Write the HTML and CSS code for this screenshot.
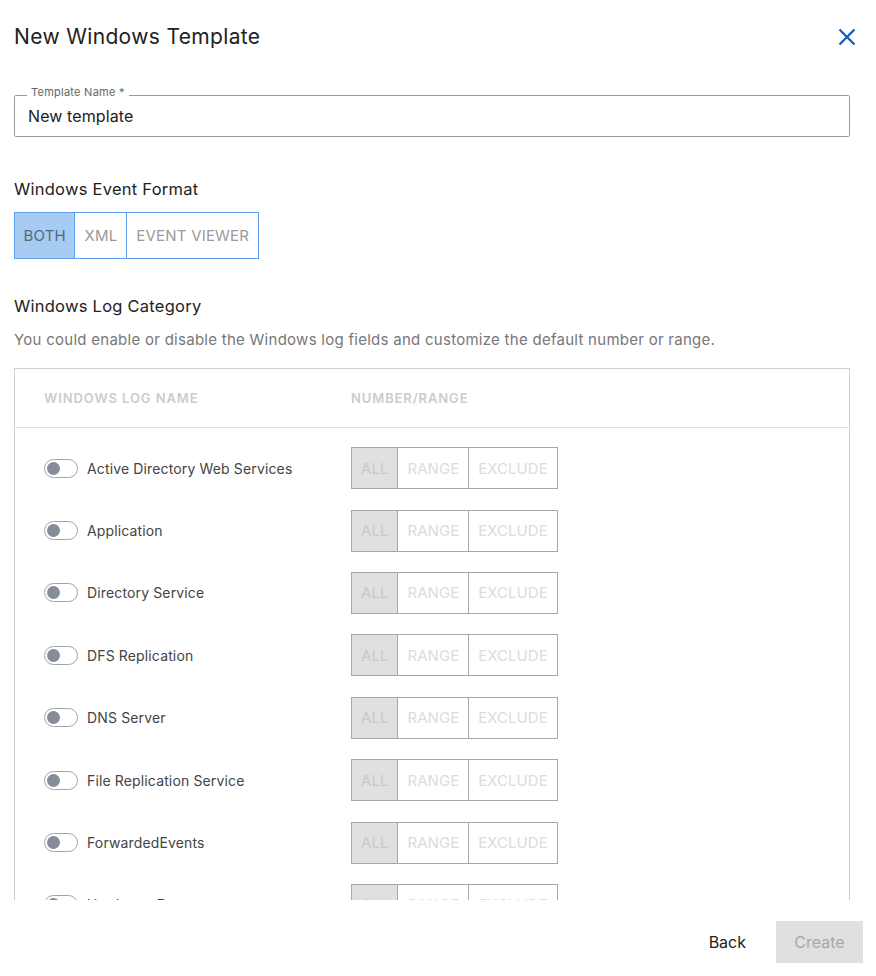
FILE: index.html
```html
<!DOCTYPE html>
<html lang="en">
<head>
<meta charset="utf-8">
<title>New Windows Template</title>
<link rel="stylesheet" href="styles.css">
</head>
<body>
<div class="dialog">
  <div class="dialog-header">
    <h1 class="dialog-title">New Windows Template</h1>
    <button class="close-btn" aria-label="Close">
      <svg width="18" height="18" viewBox="0 0 18 18"><path d="M1.5 1.5 L16.5 16.5 M16.5 1.5 L1.5 16.5" stroke="#0f5fbf" stroke-width="2.3" fill="none"/></svg>
    </button>
  </div>
  <div class="dialog-body">
    <div class="field">
      <span class="field-label">Template Name *</span>
      <div class="field-value">New template</div>
    </div>

    <h2 class="section-title first">Windows Event Format</h2>
    <div class="format-group">
      <span class="format-btn active">BOTH</span>
      <span class="format-btn">XML</span>
      <span class="format-btn">EVENT VIEWER</span>
    </div>

    <h2 class="section-title second">Windows Log Category</h2>
    <p class="section-desc">You could enable or disable the Windows log fields and customize the default number or range.</p>

    <div class="log-table">
      <div class="log-head">
        <div class="col-name">WINDOWS LOG NAME</div>
        <div class="col-range">NUMBER/RANGE</div>
      </div>
      <div class="log-rows">
        <div class="log-row"><div class="col-name"><span class="toggle"><span class="thumb"></span></span>Active Directory Web Services</div><div class="col-range"><div class="seg"><span class="seg-btn on">ALL</span><span class="seg-btn">RANGE</span><span class="seg-btn">EXCLUDE</span></div></div></div>
        <div class="log-row"><div class="col-name"><span class="toggle"><span class="thumb"></span></span>Application</div><div class="col-range"><div class="seg"><span class="seg-btn on">ALL</span><span class="seg-btn">RANGE</span><span class="seg-btn">EXCLUDE</span></div></div></div>
        <div class="log-row"><div class="col-name"><span class="toggle"><span class="thumb"></span></span>Directory Service</div><div class="col-range"><div class="seg"><span class="seg-btn on">ALL</span><span class="seg-btn">RANGE</span><span class="seg-btn">EXCLUDE</span></div></div></div>
        <div class="log-row"><div class="col-name"><span class="toggle"><span class="thumb"></span></span>DFS Replication</div><div class="col-range"><div class="seg"><span class="seg-btn on">ALL</span><span class="seg-btn">RANGE</span><span class="seg-btn">EXCLUDE</span></div></div></div>
        <div class="log-row"><div class="col-name"><span class="toggle"><span class="thumb"></span></span>DNS Server</div><div class="col-range"><div class="seg"><span class="seg-btn on">ALL</span><span class="seg-btn">RANGE</span><span class="seg-btn">EXCLUDE</span></div></div></div>
        <div class="log-row"><div class="col-name"><span class="toggle"><span class="thumb"></span></span>File Replication Service</div><div class="col-range"><div class="seg"><span class="seg-btn on">ALL</span><span class="seg-btn">RANGE</span><span class="seg-btn">EXCLUDE</span></div></div></div>
        <div class="log-row"><div class="col-name"><span class="toggle"><span class="thumb"></span></span>ForwardedEvents</div><div class="col-range"><div class="seg"><span class="seg-btn on">ALL</span><span class="seg-btn">RANGE</span><span class="seg-btn">EXCLUDE</span></div></div></div>
        <div class="log-row"><div class="col-name"><span class="toggle"><span class="thumb"></span></span>Hardware Events</div><div class="col-range"><div class="seg"><span class="seg-btn on">ALL</span><span class="seg-btn">RANGE</span><span class="seg-btn">EXCLUDE</span></div></div></div>
      </div>
    </div>
  </div>
  <div class="dialog-footer">
    <button class="btn-back">Back</button>
    <button class="btn-create" disabled>Create</button>
  </div>
</div>
</body>
</html>
```
FILE: styles.css
```css
* { box-sizing: border-box; }
html, body { margin: 0; padding: 0; background: #fff; }
body { font-family: Inter, "Noto Sans", sans-serif; color: #222; }

.dialog {
  width: 876px;
  height: 976px;
  display: flex;
  flex-direction: column;
  overflow: hidden;
}

.dialog-header {
  height: 74px;
  flex: none;
  display: flex;
  align-items: center;
  justify-content: space-between;
  padding: 0 20px 0 14px;
}
.dialog-title {
  margin: 0;
  font-size: 21px;
  font-weight: 400;
  color: #222;
  line-height: 26px;
  letter-spacing: 0.35px;
}
.close-btn {
  border: 0;
  background: none;
  padding: 0;
  width: 18px;
  height: 18px;
  display: flex;
  cursor: pointer;
}

.dialog-body {
  flex: 1;
  overflow: hidden;
  padding: 21px 26px 0 14px;
}

.field {
  position: relative;
  height: 42px;
  border: 1px solid #9a9a9a;
  border-radius: 2px;
  display: flex;
  align-items: center;
  padding-left: 13px;
}
.field-label {
  position: absolute;
  left: 12px;
  top: -10px;
  padding: 0 4px;
  background: #fff;
  font-size: 11px;
  line-height: 13px;
  color: #666;
  letter-spacing: 0.25px;
}
.field-value {
  font-size: 16px;
  color: #222;
  letter-spacing: 0.1px;
}

.section-title {
  margin: 0;
  font-size: 16.5px;
  font-weight: 400;
  line-height: 20px;
  color: #222;
  letter-spacing: 0.25px;
}
.section-title.first { margin-top: 42px; }
.section-title.second { margin-top: 37px; }

.format-group {
  margin-top: 13px;
  display: inline-flex;
  height: 47px;
  border: 1px solid #5c9ff0;
}
.format-btn {
  display: flex;
  align-items: center;
  padding: 0 9px;
  font-size: 15px;
  letter-spacing: 0.2px;
  color: #9a9a9a;
  border-left: 1px solid #5c9ff0;
}
.format-btn:first-child { border-left: 0; }
.format-btn.active {
  background: #a6ccf4;
  color: #5a6678;
  padding: 0 8.5px;
}

.section-desc {
  margin: 14px 0 0;
  font-size: 15px;
  line-height: 20px;
  color: #777;
  letter-spacing: 0.27px;
}

.log-table {
  margin-top: 18px;
  border: 1px solid #cfcfcf;
  border-bottom: 0;
  height: 600px;
}
.log-head {
  height: 59px;
  display: flex;
  align-items: center;
  border-bottom: 1px solid #e2e2e2;
  font-size: 13px;
  font-weight: 600;
  color: #cccccc;
  letter-spacing: 0.9px;
}
.col-name {
  width: 336px;
  padding-left: 29px;
  display: flex;
  align-items: center;
}
.col-range { flex: 1; }

.log-rows { padding-top: 9px; }
.log-row {
  height: 62.4px;
  display: flex;
  align-items: center;
  font-size: 14px;
  letter-spacing: 0.14px;
  color: #444;
}
.toggle {
  width: 34px;
  height: 19px;
  border: 1.5px solid #a1a5ae;
  border-radius: 10px;
  display: flex;
  align-items: center;
  padding-left: 1.5px;
  margin-right: 9px;
  flex: none;
}
.thumb {
  width: 13px;
  height: 13px;
  border-radius: 50%;
  background: #878c9a;
}

.seg {
  display: inline-flex;
  height: 42px;
  border: 1px solid #a3a7b0;
}
.seg-btn {
  display: flex;
  align-items: center;
  padding: 0 9px;
  font-size: 15px;
  letter-spacing: 0.05px;
  color: #dcdcdc;
  border-left: 1px solid #a3a7b0;
}
.seg-btn:first-child { border-left: 0; }
.seg-btn.on {
  background: #e0e0e0;
  color: #c8c8c8;
}

.dialog-footer {
  height: 76px;
  flex: none;
  display: flex;
  justify-content: flex-end;
  align-items: flex-start;
  padding: 21px 13px 0 0;
}
.btn-back {
  height: 42px;
  border: 0;
  background: none;
  font-family: inherit;
  font-size: 16px;
  color: #222;
  padding: 0 15px;
  margin-right: 15px;
  cursor: pointer;
}
.btn-create {
  height: 42px;
  width: 87px;
  border: 0;
  background: #e0e0e0;
  font-family: inherit;
  font-size: 16px;
  color: #a8a8a8;
}
```
